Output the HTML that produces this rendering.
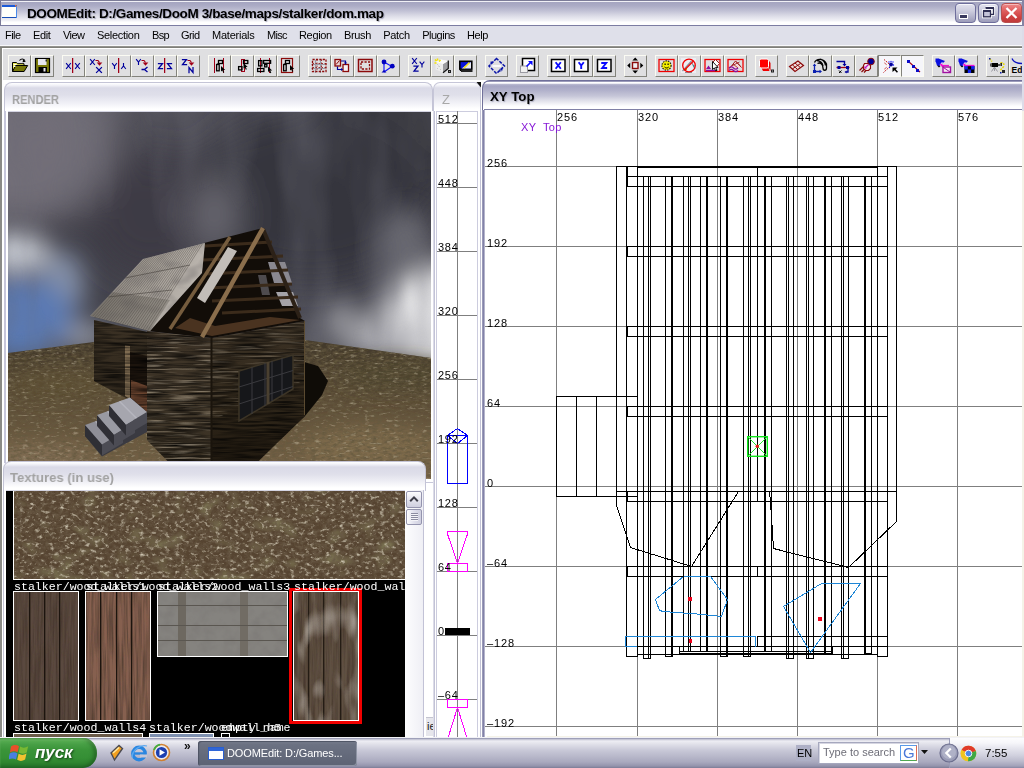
<!DOCTYPE html>
<html><head><meta charset="utf-8"><title>DOOMEdit</title>
<style>
*{margin:0;padding:0;box-sizing:border-box}
html,body{width:1024px;height:768px;overflow:hidden;background:#e1e1ea;font-family:"Liberation Sans",sans-serif}
.a{position:absolute}
#menu,#title,.gl,.zl,.tx,.hl,.tk{will-change:transform}
svg{position:absolute;display:block;overflow:hidden}
#title{left:0;top:0;width:1024px;height:26px;background:linear-gradient(#7c7c98 0,#7c7c98 1px,#f0f0f6 1px,#f0f0f6 2px,#a4a4c0 2px,#acacc6 6px,#c2c2d5 11px,#dcdce7 16px,#f3f3f7 21px,#fff 22px,#fff 25px,#7c7ca2 25px,#7c7ca2 26px)}
#title .t{left:27px;top:6px;font:bold 13.5px "Liberation Sans",sans-serif;color:#000;white-space:nowrap;text-shadow:1px 1px 1px rgba(110,110,140,.55)}
#menu{left:0;top:26px;width:1024px;height:20px;background:linear-gradient(#dfe0ea 0,#dfe0ea 19px,#f8f8fb 19px)}
#menu span{position:absolute;top:3px;font:11px "Liberation Sans",sans-serif;color:#000;white-space:nowrap;transform-origin:0 0}
.b{position:absolute;top:55px;width:23px;height:22px;background:#dfdfe1;border:1px solid;border-color:#fbfbf3 #83837c #83837c #fbfbf3}
.b.p{background:#efeff0;border-color:#83837c #fbfbf3 #fbfbf3 #83837c}
.b svg{left:2px;top:2px;width:17px;height:16px}
.hl{font:bold 13px "Liberation Sans",sans-serif;color:#a2a2a2;position:absolute;white-space:nowrap}
.gl{font:11px "Liberation Sans",sans-serif;letter-spacing:.85px;color:#000;position:absolute;white-space:nowrap;line-height:12px}
.zl{font:11px "Liberation Sans",sans-serif;letter-spacing:.75px;color:#000;position:absolute;white-space:nowrap;line-height:12px}
.tx{font:11.6px "Liberation Mono",monospace;color:#fff;position:absolute;white-space:nowrap;line-height:12px}
</style></head><body>
<!-- window frame -->
<div class="a" style="left:0;top:0;width:2px;height:46px;background:linear-gradient(90deg,#7e7e9a 0,#7e7e9a 1px,#c9c9d9 1px)"></div>
<div class="a" style="left:0;top:46px;width:2px;height:692px;background:#8a8a86"></div>
<div class="a" style="left:2px;top:48px;width:1020px;height:690px;background:#fff"></div>
<div class="a" style="left:3px;top:49px;width:1019px;height:31px;background:#dfdfe1"></div>
<!-- TITLE BAR -->
<div id="title" class="a">
<div class="a" style="left:0;top:0;width:1px;height:26px;background:#7a7a98"></div>
<svg style="left:2px;top:5px" width="15" height="13" viewBox="0 0 15 13"><rect x="0" y="0" width="15" height="13" fill="#fffffa"/><rect x="0" y="0" width="15" height="2" fill="#1c5ad8"/><rect x="0" y="12" width="15" height="1" fill="#1a50b8"/><rect x="14" y="1" width="1" height="12" fill="#4a8ae8"/><rect x="13" y="0" width="1.500" height="1.500" fill="#f07030"/></svg>
<div class="a t" style="letter-spacing:-0.379px">DOOMEdit: D:/Games/DooM 3/base/maps/stalker/dom.map</div>
<div class="a" style="left:955px;top:3px;width:21px;height:20px;border-radius:4px;border:1px solid #6e6e9c;background:linear-gradient(#e2e2ee 0,#cfcfe0 35%,#b4b4cc 70%,#9c9cb9 100%);box-shadow:inset 0 1px 0 rgba(255,255,255,.7)"></div>
<div class="a" style="left:959px;top:14px;width:9px;height:5px;background:#fff"></div><div class="a" style="left:960px;top:15px;width:7px;height:3px;background:#3a3a5e"></div>
<div class="a" style="left:978px;top:3px;width:21px;height:20px;border-radius:4px;border:1px solid #6e6e9c;background:linear-gradient(#e2e2ee 0,#cfcfe0 35%,#b4b4cc 70%,#9c9cb9 100%);box-shadow:inset 0 1px 0 rgba(255,255,255,.7)"></div>
<svg style="left:982px;top:6px" width="13" height="13" viewBox="0 0 13 13"><path d="M4 1.800h7.500v6.500h-2.500" fill="none" stroke="#fff" stroke-width="3"/><rect x="1.500" y="4.800" width="7" height="6" fill="none" stroke="#fff" stroke-width="3"/><path d="M4 2.300h7.500v6h-2.500" fill="none" stroke="#2e2e52" stroke-width="1.300"/><path d="M3.500 1.800h8.500" stroke="#2e2e52" stroke-width="1.600"/><rect x="1.500" y="5.300" width="7" height="5.500" fill="#c4c4d8" stroke="#2e2e52" stroke-width="1.300"/><path d="M1 4.800h8" stroke="#2e2e52" stroke-width="1.600"/></svg>
<div class="a" style="left:1001px;top:3px;width:21px;height:20px;border-radius:4px;border:1px solid #b85050;background:linear-gradient(#ee8a8a 0,#de5c5c 40%,#cc4040 75%,#c03a3a 100%);box-shadow:inset 0 1px 0 rgba(255,220,220,.6)"></div>
<svg style="left:1004px;top:6px" width="15" height="14" viewBox="0 0 15 14"><path d="M2.500 2l10 10M12.500 2l-10 10" stroke="#fff" stroke-width="2.300"/></svg>
<div class="a" style="left:1022px;top:0;width:2px;height:26px;background:#8484a4"></div>
</div>
<!-- MENU -->
<div id="menu" class="a">
<span style="left:5.0px;letter-spacing:-0.559px">File</span>
<span style="left:33.0px;letter-spacing:-0.367px">Edit</span>
<span style="left:63.0px;letter-spacing:-0.539px">View</span>
<span style="left:97.0px;letter-spacing:-0.307px">Selection</span>
<span style="left:152.0px;letter-spacing:-0.656px">Bsp</span>
<span style="left:181.0px;letter-spacing:-0.570px">Grid</span>
<span style="left:212.0px;letter-spacing:-0.236px">Materials</span>
<span style="left:267.0px;letter-spacing:-0.702px">Misc</span>
<span style="left:299.0px;letter-spacing:-0.343px">Region</span>
<span style="left:344.0px;letter-spacing:-0.350px">Brush</span>
<span style="left:383.2px;letter-spacing:-0.308px">Patch</span>
<span style="left:422.2px;letter-spacing:-0.497px">Plugins</span>
<span style="left:467.0px;letter-spacing:-0.406px">Help</span>
</div>
<div class="a" style="left:0;top:46px;width:1022px;height:2px;background:linear-gradient(#9e9e9a,#74746e)"></div>
<div class="a" style="left:2px;top:48px;width:1020px;height:1px;background:#fff"></div>
<!-- TOOLBAR -->
<div class="a" style="left:4px;top:48px;width:1018px;height:34px;overflow:hidden">
<div class="b" style="left:4px;top:7px"><svg style="left:-1px;top:-1px;width:23px;height:22px" viewBox="0 0 23 22"><path d="M11.5 5.5c1.5-2 4-2 5.500 0" stroke="#000" fill="none" stroke-width="1.100"/><path d="M15.300 4l2.500 2.800-3.300.4z" fill="#000"/><path d="M4.500 16.500v-9h4l1 1.200h6.500v2.300" fill="#ecec50" stroke="#000" stroke-width="1"/><path d="M4.500 16.500l3.200-6h12l-3.600 6z" fill="#77770a" stroke="#000" stroke-width="1"/><path d="M5.500 9.500h3M5.500 11.500h2" stroke="#fff" stroke-width="1"/></svg></div>
<div class="b" style="left:27px;top:7px"><svg style="left:-1px;top:-1px;width:23px;height:22px" viewBox="0 0 23 22"><rect x="4.500" y="3.500" width="14" height="14" fill="#7a7a08" stroke="#000" stroke-width="1.200"/><rect x="7" y="4" width="8.500" height="6" fill="#e6e6ee"/><rect x="14.600" y="4.500" width="1.200" height="2" fill="#000"/><rect x="7.500" y="12" width="8.500" height="5.500" fill="#000"/><rect x="12.500" y="13" width="2" height="3.500" fill="#e6e6ee"/></svg></div>
<div class="b" style="left:58px;top:7px"><svg style="left:-1px;top:-1px;width:23px;height:22px" viewBox="0 0 23 22"><path d="M4.5 8.5L8.5 13.5M8.5 8.5L4.5 13.5" stroke="#00009c" stroke-width="1.15" fill="none" stroke-linecap="square"/><rect x="10" y="3" width="1" height="15" fill="#a00018" shape-rendering="crispEdges"/><rect x="11" y="3" width="1" height="15" fill="#a00018" opacity=".25" shape-rendering="crispEdges"/><path d="M13.5 8.5L17.5 13.5M17.5 8.5L13.5 13.5" stroke="#00009c" stroke-width="1.15" fill="none" stroke-linecap="square"/></svg></div>
<div class="b" style="left:81px;top:7px"><svg style="left:-1px;top:-1px;width:23px;height:22px" viewBox="0 0 23 22"><path d="M5.5 4.5L9.5 9.5M9.5 4.5L5.5 9.5" stroke="#00009c" stroke-width="1.15" fill="none" stroke-linecap="square"/><path d="M10.5 5.5h2.500L14.5 7.5" stroke="#a00018" stroke-width="1.200" fill="none"/><path d="M11.7 7.5h5.600L14.5 10.7z" fill="#a00018"/><path d="M11.5 12.5L16.5 17.5M16.5 12.5L11.5 17.5" stroke="#00009c" stroke-width="1.15" fill="none" stroke-linecap="square"/></svg></div>
<div class="b" style="left:104px;top:7px"><svg style="left:-1px;top:-1px;width:23px;height:22px" viewBox="0 0 23 22"><path d="M4.5 8.5L6.5 11L8.5 8.5M6.5 11V13.5" stroke="#00009c" stroke-width="1.15" fill="none" stroke-linecap="square"/><rect x="10" y="3" width="1" height="15" fill="#a00018" shape-rendering="crispEdges"/><rect x="11" y="3" width="1" height="15" fill="#a00018" opacity=".25" shape-rendering="crispEdges"/><path d="M13.5 13.5L15.5 11L17.5 13.5M15.5 11V8.5" stroke="#00009c" stroke-width="1.15" fill="none" stroke-linecap="square"/></svg></div>
<div class="b" style="left:127px;top:7px"><svg style="left:-1px;top:-1px;width:23px;height:22px" viewBox="0 0 23 22"><path d="M5.5 4.5L7.5 7L9.5 4.5M7.5 7V9.5" stroke="#00009c" stroke-width="1.15" fill="none" stroke-linecap="square"/><path d="M10.5 5.5h2.500L14.5 7.5" stroke="#a00018" stroke-width="1.200" fill="none"/><path d="M11.7 7.5h5.600L14.5 10.7z" fill="#a00018"/><path d="M10.500 14.500h3M16.500 12l-3 2.500 3 2.500" stroke="#00009c" stroke-width="1.300" fill="none"/></svg></div>
<div class="b" style="left:150px;top:7px"><svg style="left:-1px;top:-1px;width:23px;height:22px" viewBox="0 0 23 22"><path d="M4.5 8.5H8.5L4.5 13.5H8.5" stroke="#00009c" stroke-width="1.25" fill="none" stroke-linecap="square"/><rect x="10" y="3" width="1" height="15" fill="#a00018" shape-rendering="crispEdges"/><rect x="11" y="3" width="1" height="15" fill="#a00018" opacity=".25" shape-rendering="crispEdges"/><path d="M17.5 8.5H13.5L17.5 13.5H13.5" stroke="#00009c" stroke-width="1.25" fill="none" stroke-linecap="square"/></svg></div>
<div class="b" style="left:173px;top:7px"><svg style="left:-1px;top:-1px;width:23px;height:22px" viewBox="0 0 23 22"><path d="M5.5 4.5H9.5L5.5 9.5H9.5" stroke="#00009c" stroke-width="1.25" fill="none" stroke-linecap="square"/><path d="M10.5 5.5h2.500L14.5 7.5" stroke="#a00018" stroke-width="1.200" fill="none"/><path d="M11.7 7.5h5.600L14.5 10.7z" fill="#a00018"/><path d="M12.0 17.5V12.5L16.0 17.5V12.5" stroke="#00009c" stroke-width="1.25" fill="none" stroke-linecap="square"/></svg></div>
<div class="b" style="left:204px;top:7px"><svg style="left:-1px;top:-1px;width:23px;height:22px" viewBox="0 0 23 22"><rect x="6" y="3" width="1" height="15" fill="#a00018" shape-rendering="crispEdges"/><rect x="15" y="3" width="1" height="15" fill="#a00018" shape-rendering="crispEdges"/><rect x="10.500" y="5.500" width="4" height="3" fill="none" stroke="#000" stroke-width="1.300"/><rect x="8.600" y="9.500" width="2.600" height="6.300" fill="none" stroke="#000" stroke-width="1.300"/><path d="M9 9.500l1.500-1" stroke="#000" stroke-width="1.200"/><path d="M13 11v5.600l1.300-1.200 1 2.300 1-.500-1-2.200h1.900z" fill="#000"/></svg></div>
<div class="b" style="left:227px;top:7px"><svg style="left:-1px;top:-1px;width:23px;height:22px" viewBox="0 0 23 22"><rect x="10.500" y="4.500" width="3" height="12" fill="none" stroke="#a00018" stroke-width="1" shape-rendering="crispEdges"/><rect x="12.500" y="5.500" width="4.300" height="3" fill="none" stroke="#000" stroke-width="1.300"/><rect x="7.600" y="11.600" width="3.400" height="3.300" fill="none" stroke="#000" stroke-width="1.300"/><path d="M12.5 8v5.600l1.300-1.200 1 2.300 1-.500-1-2.200h1.900z" fill="#000"/></svg></div>
<div class="b" style="left:250px;top:7px"><svg style="left:-1px;top:-1px;width:23px;height:22px" viewBox="0 0 23 22"><rect x="6" y="3" width="1" height="15" fill="#a00018" shape-rendering="crispEdges"/><rect x="15" y="3" width="1" height="15" fill="#a00018" shape-rendering="crispEdges"/><rect x="4.600" y="5.600" width="3.300" height="5.300" fill="none" stroke="#000" stroke-width="1.300"/><rect x="9.600" y="5.500" width="7" height="2.800" fill="none" stroke="#000" stroke-width="1.300"/><rect x="3.600" y="13.500" width="6.300" height="3" fill="none" stroke="#000" stroke-width="1.300"/><rect x="10.600" y="9.600" width="2.300" height="2.300" fill="none" stroke="#000" stroke-width="1.300"/><path d="M14 11.5v5.600l1.300-1.200 1 2.300 1-.500-1-2.200h1.900z" fill="#000"/></svg></div>
<div class="b" style="left:273px;top:7px"><svg style="left:-1px;top:-1px;width:23px;height:22px" viewBox="0 0 23 22"><rect x="4.500" y="3.500" width="11" height="14" fill="none" stroke="#8c0a0a" stroke-width="1.200"/><rect x="8.500" y="5.500" width="4" height="3" fill="none" stroke="#000" stroke-width="1.300"/><rect x="6.600" y="9.500" width="2.600" height="6.300" fill="none" stroke="#000" stroke-width="1.300"/><path d="M7 9.500l1.500-1" stroke="#000" stroke-width="1.200"/><path d="M13 10v5.600l1.300-1.200 1 2.300 1-.500-1-2.200h1.900z" fill="#000"/></svg></div>
<div class="b" style="left:304px;top:7px"><svg style="left:-1px;top:-1px;width:23px;height:22px" viewBox="0 0 23 22"><path d="M7.500 5v13M12.500 5v13M3.500 9.500h14M3.500 13.500h14" stroke="#9a9aa6" stroke-width="1.200"/><rect x="4.500" y="4.500" width="13.500" height="12" fill="none" stroke="#8c0a0a" stroke-width="1.300" stroke-dasharray="2.200 1.200"/><path d="M4.500 8.500h13.500M4.500 12.500h13.500M9 4.500v12M13.500 4.500v12" stroke="#8c0a0a" stroke-width="1" stroke-dasharray="1.500 1.500" opacity=".8"/></svg></div>
<div class="b" style="left:327px;top:7px"><svg style="left:-1px;top:-1px;width:23px;height:22px" viewBox="0 0 23 22"><rect x="4" y="4.500" width="5.500" height="6.500" fill="#e8d8d8" stroke="#8c0a0a" stroke-width="1.300"/><path d="M5 9.500l3.500-4" stroke="#8c0a0a" stroke-width="1"/><rect x="12" y="9.500" width="5.500" height="7" fill="#f4f4f8" stroke="#8c0a0a" stroke-width="1.300"/><path d="M10 6h4.500v2.500M6.500 11.500v3h4" stroke="#00009c" stroke-width="1.200" fill="none"/><path d="M13 7.500h3l-1.500 2.200zM10 13h0l2.200 1.500-2.200 1.500z" fill="#00009c"/></svg></div>
<div class="b" style="left:350px;top:7px"><svg style="left:-1px;top:-1px;width:23px;height:22px" viewBox="0 0 23 22"><rect x="4.500" y="4.500" width="13.500" height="12" fill="none" stroke="#8c0a0a" stroke-width="1.500"/><rect x="7" y="7" width="8.500" height="7" fill="none" stroke="#8c0a0a" stroke-width="1.300" stroke-dasharray="2.200 1.300"/></svg></div>
<div class="b" style="left:373px;top:7px"><svg style="left:-1px;top:-1px;width:23px;height:22px" viewBox="0 0 23 22"><path d="M7 7v10M7 7l8 4.500L7 17" stroke="#0a0aff" stroke-width="1.100" fill="none"/><circle cx="7" cy="7" r="2.400" fill="#0000c0"/><circle cx="15.300" cy="11.200" r="2.400" fill="#0000c0"/><path d="M4.500 17.500l2.500-2.500 2.500 2.500z" fill="#0000c0"/></svg></div>
<div class="b" style="left:404px;top:7px"><svg style="left:-1px;top:-1px;width:23px;height:22px" viewBox="0 0 23 22"><path d="M4.5 3.5L8.5 8.5M8.5 3.5L4.5 8.5" stroke="#00009c" stroke-width="1.15" fill="none" stroke-linecap="square"/><path d="M12.0 7.0L14 9.5L16.0 7.0M14 9.5V12.0" stroke="#00009c" stroke-width="1.15" fill="none" stroke-linecap="square"/><path d="M6.0 11.0H10.0L6.0 16.0H10.0" stroke="#00009c" stroke-width="1.25" fill="none" stroke-linecap="square"/></svg></div>
<div class="b" style="left:427px;top:7px"><svg style="left:-1px;top:-1px;width:23px;height:22px" viewBox="0 0 23 22"><path d="M4.500 7l5.500-2.500 7 1.500v7.500l-5 4-7.500-3z" fill="#ececec"/><path d="M12 17.500V9l5-3v7.500z" fill="#9c9ca0"/><path d="M4.500 7l7.500 2 5-3-7-1.500z" fill="#fbfbfb"/><path d="M17.300 5.500v8l-5.300 4.300" fill="none" stroke="#111" stroke-width="1.200"/><path d="M6 9.500h1M8 11.500h1M6 13.500h1M9 14.500h1M7 11h1" stroke="#c8c8c8" stroke-width="1"/><path d="M4 4.500l1.500 1.500M6.500 3.500v2M3.500 8h2M8 6.500l1.500-1.500" stroke="#f4e400" stroke-width="1.500"/><rect x="17" y="15" width="3" height="3" fill="#1c1c1c" shape-rendering="crispEdges"/><rect x="18" y="16" width="1" height="1" fill="#999" shape-rendering="crispEdges"/></svg></div>
<div class="b" style="left:450px;top:7px"><svg style="left:-1px;top:-1px;width:23px;height:22px" viewBox="0 0 23 22"><rect x="5.800" y="6.300" width="12" height="7.800" fill="#0a14d8" stroke="#000" stroke-width="1.600"/><path d="M17 7v6.500h-9.500z" fill="#e6e8f4"/><path d="M10 13l5.500-5.500" stroke="#f2e21c" stroke-width="1.700"/><path d="M7 16h11.500" stroke="#000" stroke-width="1.700"/><path d="M6.500 14.500v1.500" stroke="#000" stroke-width="1.300"/></svg></div>
<div class="b" style="left:481px;top:7px"><svg style="left:-1px;top:-1px;width:23px;height:22px" viewBox="0 0 23 22"><path d="M11.500 3.500L4 11l7.500 7.500L19.500 11z" fill="none" stroke="#0a14a8" stroke-width="1.500" stroke-dasharray="3.200 1.300"/><rect x="7.500" y="10" width="8.500" height="2" fill="#fafafc"/><path d="M5.500 6.500h3.500l-3.500 3.500zM17.500 15.500h-3.500l3.500-3.500zM13.500 16l3 .5-1.500-3z" fill="#0a14a8"/></svg></div>
<div class="b" style="left:512px;top:7px"><svg style="left:-1px;top:-1px;width:23px;height:22px" viewBox="0 0 23 22"><rect x="6.500" y="3.500" width="12" height="12" fill="#fff" stroke="#000" stroke-width="1.500"/><rect x="4.500" y="11" width="7" height="6.500" fill="#f0f0f0" stroke="#9a9aa2" stroke-width="1"/><path d="M10.500 11.500l5-5" stroke="#0a0aff" stroke-width="1.600"/><path d="M12 6h4.500v4.500z" fill="#0a0aff"/></svg></div>
<div class="b" style="left:543px;top:7px"><svg style="left:-1px;top:-1px;width:23px;height:22px" viewBox="0 0 23 22"><rect x="4.500" y="4.500" width="13.500" height="12" fill="#fff" stroke="#000" stroke-width="1.500"/><path d="M9.2 8.0L13.2 13.0M13.2 8.0L9.2 13.0" stroke="#0a0aff" stroke-width="1.9" fill="none" stroke-linecap="square"/></svg></div>
<div class="b" style="left:566px;top:7px"><svg style="left:-1px;top:-1px;width:23px;height:22px" viewBox="0 0 23 22"><rect x="4.500" y="4.500" width="13.500" height="12" fill="#fff" stroke="#000" stroke-width="1.500"/><path d="M9.2 8.0L11.2 10.5L13.2 8.0M11.2 10.5V13.0" stroke="#0a0aff" stroke-width="1.9" fill="none" stroke-linecap="square"/></svg></div>
<div class="b" style="left:589px;top:7px"><svg style="left:-1px;top:-1px;width:23px;height:22px" viewBox="0 0 23 22"><rect x="4.500" y="4.500" width="13.500" height="12" fill="#fff" stroke="#000" stroke-width="1.500"/><path d="M9.2 8.0H13.2L9.2 13.0H13.2" stroke="#0a0aff" stroke-width="1.9" fill="none" stroke-linecap="square"/></svg></div>
<div class="b" style="left:620px;top:7px"><svg style="left:-1px;top:-1px;width:23px;height:22px" viewBox="0 0 23 22"><rect x="8.500" y="7.500" width="5.500" height="6" fill="#f0f0f4" stroke="#8c0a0a" stroke-width="1.400"/><path d="M11.200 2.500l2.800 3h-5.600zM11.200 18.500l2.800-3h-5.600zM3.200 10.500l3-2.800v5.600zM19.300 10.500l-3-2.800v5.600z" fill="#000"/></svg></div>
<div class="b" style="left:651px;top:7px"><svg style="left:-1px;top:-1px;width:23px;height:22px" viewBox="0 0 23 22"><rect x="4" y="4.500" width="15" height="12" fill="none" stroke="#f00000" stroke-width="1.300"/><circle cx="11.500" cy="10.500" r="4.600" fill="#f4f000" stroke="#111" stroke-width="1.100" stroke-dasharray="1.500 1"/><rect x="9.500" y="8.500" width="1.200" height="1.500" fill="#000"/><rect x="12.500" y="8.500" width="1.200" height="1.500" fill="#000"/><path d="M9.500 12c1.300 1.300 3 1.300 4.200 0" stroke="#000" fill="none" stroke-width="1"/></svg></div>
<div class="b" style="left:674px;top:7px"><svg style="left:-1px;top:-1px;width:23px;height:22px" viewBox="0 0 23 22"><rect x="3" y="3" width="15" height="15" fill="#ededf3"/><path d="M4.500 16l9-10M7 17.500h7M14 8l3 6" stroke="#8c8c96" stroke-width="1.200"/><rect x="7" y="13" width="2" height="2" fill="#c8b400"/><rect x="15" y="10" width="1.500" height="1.500" fill="#20a0a0"/><circle cx="11" cy="10.500" r="6.300" fill="none" stroke="#f00000" stroke-width="1.300"/><path d="M6.500 15L15.500 6" stroke="#f00000" stroke-width="1.300"/></svg></div>
<div class="b" style="left:697px;top:7px"><svg style="left:-1px;top:-1px;width:23px;height:22px" viewBox="0 0 23 22"><rect x="4" y="4.500" width="15" height="12" fill="none" stroke="#f00000" stroke-width="1.300"/><path d="M5 14l2.500-3.500L10 14z" fill="#8a10a0"/><path d="M5 15.500h9" stroke="#8a10a0" stroke-width="1.500"/><path d="M11 8l3.500-3.500 4 4-3.500 4z" fill="#fff" stroke="#a01818" stroke-width="1"/><path d="M11.500 6.500v8l1.800-1.600 1.400 3 1.300-.6-1.400-2.900h2.400z" fill="#fff" stroke="#000" stroke-width=".900"/></svg></div>
<div class="b" style="left:720px;top:7px"><svg style="left:-1px;top:-1px;width:23px;height:22px" viewBox="0 0 23 22"><rect x="4" y="4.500" width="15" height="12" fill="none" stroke="#f00000" stroke-width="1.300"/><path d="M5.500 13.500l6-7.500 6 6.500" fill="#f2dada" stroke="#a01818" stroke-width="1"/><path d="M9 9l5 4M12 6.500l4 4M7.500 11l8-4" stroke="#a01818" stroke-width=".800"/><path d="M5 13c1.500-1.500 3-1.500 4.500 0s3 1.500 4.500 0M5 15.500c1.500-1.500 3-1.500 4.500 0s3 1.500 4.500 0" stroke="#8a10a0" stroke-width="1.300" fill="none"/></svg></div>
<div class="b" style="left:751px;top:7px"><svg style="left:-1px;top:-1px;width:23px;height:22px" viewBox="0 0 23 22"><path d="M6 12l2 4h6.500l-1.500-4z" fill="#f00000"/><path d="M13.500 5l2 3v8l-2-4z" fill="#e00000"/><rect x="4.500" y="4" width="9" height="9" rx="1.500" fill="#ff0000" stroke="#fff" stroke-width="1"/><rect x="16" y="14.500" width="3" height="3" fill="#222"/><rect x="17" y="15.500" width="1" height="1" fill="#bbb"/></svg></div>
<div class="b" style="left:782px;top:7px"><svg style="left:-1px;top:-1px;width:23px;height:22px" viewBox="0 0 23 22"><path d="M3.500 11.500l8.500-5.500 5.500 4.500-8.500 6z" fill="#f0dcdc" stroke="#8c0a0a" stroke-width="1.200"/><path d="M6.300 9.700l5.500 5M9 8l5.500 4.700M6.300 14l8.500-5.700" stroke="#8c0a0a" stroke-width="1"/></svg></div>
<div class="b" style="left:805px;top:7px"><svg style="left:-1px;top:-1px;width:23px;height:22px" viewBox="0 0 23 22"><path d="M5.500 7.500c2-4.500 9.500-4.500 12 1.500v4c0 3-3.500 3-3.500 0 0-4-3-6-5.500-4.500M8 5.500c3 .5 5.500 2.500 6 5.500M11.500 4c2.500 1 4.500 3 5 6.500" fill="none" stroke="#000" stroke-width="1.300"/><path d="M5.500 9.500v7h6.500" stroke="#0a1fb0" stroke-width="1.300" fill="none"/><path d="M3.800 11l1.700-2.500L7.200 11zM10.500 14.800l2.500 1.700-2.500 1.700zM4 15h3v3h-3z" fill="#0a1fb0"/></svg></div>
<div class="b" style="left:828px;top:7px"><svg style="left:-1px;top:-1px;width:23px;height:22px" viewBox="0 0 23 22"><path d="M4.500 6.500h8v3" stroke="#00009c" stroke-width="1.400" fill="none"/><path d="M10.500 9h4l-2 2.500z" fill="#00009c"/><path d="M4.500 12.500h13" stroke="#a00018" stroke-width="1.300"/><rect x="5.500" y="11" width="3" height="3" fill="#00009c"/><rect x="14" y="11" width="3" height="3" fill="#00009c"/><path d="M16 14v3h-2" stroke="#00009c" stroke-width="1.300" fill="none"/><path d="M14.500 15.500v3l-2-1.500z" fill="#00009c"/><path d="M7 15.500l2.500 2.500M9.500 15.500l-2.500 2.500" stroke="#000" stroke-width="1"/></svg></div>
<div class="b" style="left:851px;top:7px"><svg style="left:-1px;top:-1px;width:23px;height:22px" viewBox="0 0 23 22"><path d="M4.500 15.500l6-6M6.500 17l5-5M9 17.500l3.500-3.500" stroke="#8c0a0a" stroke-width="1.200"/><path d="M9.500 8.500h4l2 2v3l-2 2h-3l-2-2v-3z" fill="#f4e8ec" stroke="#8c0a0a" stroke-width="1.100"/><path d="M13.500 9.500l-3.500 3.500" stroke="#c010c0" stroke-width="1.300"/><path d="M9.500 11v2.500H12z" fill="#c010c0"/><circle cx="16" cy="6.500" r="3.300" fill="#00009c" stroke="#8c0a0a" stroke-width="1"/></svg></div>
<div class="b p" style="left:874px;top:7px"><svg style="left:-1px;top:-1px;width:23px;height:22px" viewBox="0 0 23 22"><rect x="1" y="1" width="21" height="20" fill="#f6f6fa"/><path d="M6 4.500l7 6-7.500 7M6.500 8l2.500 2M6.500 14l2.500-2" stroke="#c01818" stroke-width="1" fill="none" stroke-dasharray="1.600 1"/><circle cx="13" cy="9.500" r="1.900" fill="#00009c"/><path d="M11 7l.01 0M15 7l.01 0M15.500 10l.01 0M11.500 12.500l.01 0M13 6.500l.01 0" stroke="#0a0aff" stroke-width="1.300" stroke-linecap="round"/><path d="M14.500 12.500h5l-1.800 1.700 2.300 2.500-1.100 1-2.300-2.500-2.100 1.800z" fill="#000"/></svg></div>
<div class="b p" style="left:897px;top:7px"><svg style="left:-1px;top:-1px;width:23px;height:22px" viewBox="0 0 23 22"><rect x="1" y="1" width="21" height="20" fill="#f6f6fa"/><path d="M7 6l12 11" stroke="#a00018" stroke-width="1.100"/><rect x="6" y="5" width="3" height="3" fill="#0a0ac8"/><rect x="11" y="10" width="3" height="3" fill="#0a0ac8"/><rect x="15" y="14" width="3" height="3" fill="#0a0ac8"/></svg></div>
<div class="b" style="left:928px;top:7px"><svg style="left:-1px;top:-1px;width:23px;height:22px" viewBox="0 0 23 22"><path d="M3.500 6l3-2.500 6.500 2.500-5.500 5.500-2.500-1z" fill="#0a10e0"/><path d="M3.500 3.500h3v3h-3z" fill="#0a10e0"/><path d="M5 10.500l2 2 1.500-1.500z" fill="#000"/><path d="M8 10.500l2.500-3" stroke="#fff" stroke-width="1.200"/><path d="M8.500 9l3 3" stroke="#f010d0" stroke-width="1.800"/><rect x="11" y="12" width="7.500" height="5.500" fill="#f4e8f4" stroke="#a010a0" stroke-width="1.400"/><path d="M11.500 12.500l6.500 4.500" stroke="#a010a0" stroke-width="1"/><path d="M9 10.500h8" stroke="#f010d0" stroke-width="1.200"/></svg></div>
<div class="b" style="left:951px;top:7px"><svg style="left:-1px;top:-1px;width:23px;height:22px" viewBox="0 0 23 22"><path d="M3.500 6l3-2.500 6.500 2.500-5.500 5.500-2.500-1z" fill="#0a10e0"/><path d="M3.500 3.500h3v3h-3z" fill="#0a10e0"/><path d="M5 10.500l2 2 1.500-1.500z" fill="#000"/><path d="M8 10.500l2.500-3" stroke="#fff" stroke-width="1.200"/><path d="M8.500 9l3 3" stroke="#f010d0" stroke-width="1.800"/><rect x="9.500" y="11" width="10" height="7" fill="#000"/><rect x="9.500" y="11" width="3.300" height="3.500" fill="#1020f0"/><rect x="16.100" y="11" width="3.400" height="3.500" fill="#1020f0"/><rect x="12.800" y="14.500" width="3.300" height="3.500" fill="#1020f0"/><path d="M9 10.500h10.500" stroke="#f010d0" stroke-width="1.300"/></svg></div>
<div class="b" style="left:982px;top:7px"><svg style="left:-1px;top:-1px;width:23px;height:22px" viewBox="0 0 23 22"><rect x="5.500" y="8" width="6.500" height="4" fill="#000"/><path d="M12 9h2v2h-2zM4 8.500h1.500v3H4z" fill="#555"/><path d="M8.500 12l-3 4.500M8.500 12l3 4.500M8.500 12v4" stroke="#9a9aa2" stroke-width="1"/><path d="M3.500 3.500l2.500 3M14.500 8c3-1 4 1 3 3.500s-3 2-3 5" stroke="#e8d800" stroke-width="1.500" fill="none" stroke-dasharray="2 1"/><rect x="14.500" y="8" width="1.300" height="3" fill="#000"/><rect x="16" y="15" width="3" height="3" fill="#222"/><rect x="14" y="17" width="1.500" height="1.500" fill="#0a1fb0"/><rect x="3" y="3" width="1.500" height="1.500" fill="#0a1fb0"/></svg></div>
<div class="b" style="left:1005px;top:7px"><svg style="left:-1px;top:-1px;width:23px;height:22px" viewBox="0 0 23 22"><path d="M3 3.500c1.500 3.500 5 5 10 5" stroke="#0a10c0" stroke-width="1.300" fill="none"/><text x="2.500" y="17.500" font-family="Liberation Sans" font-weight="bold" font-size="8.500" fill="#000">Edi</text></svg></div>
</div>
<div class="a" style="left:1022px;top:26px;width:2px;height:712px;background:#dcdce8"></div>
<!-- RENDER PANEL -->
<div class="a" style="left:4px;top:82px;width:429px;height:30px;border-radius:8px 8px 0 0;background:linear-gradient(#fff 0,#f4f4f9 2px,#dadae7 5px,#dfdfea 12px,#f0f0f6 20px,#fff 26px);border:1px solid #c4c4d6;border-bottom:none"></div>
<div class="hl" style="transform:scaleX(0.8560);transform-origin:0 0;left:11.500px;top:92px">RENDER</div>
<div class="a" style="left:4px;top:111px;width:4px;height:352px;background:linear-gradient(90deg,#c6c6da 0,#c6c6da 2px,#fff 2px)"></div>
<div class="a" style="left:431px;top:111px;width:2px;height:627px;background:#fff"></div>
<div class="a" style="left:425px;top:479px;width:6px;height:259px;background:#fff"></div>
<div class="a" style="left:426px;top:482px;width:8px;height:1px;background:#c8c8da"></div>
<div class="a" style="left:8px;top:111px;width:423px;height:1px;background:#d4d4e2"></div>
<svg style="left:8px;top:112px" width="423" height="367" viewBox="8 112 423 367">
<defs>
<linearGradient id="sky" x1="0" y1="0" x2="0" y2="1"><stop offset="0" stop-color="#4f4e57"/><stop offset=".3" stop-color="#403f48"/><stop offset=".55" stop-color="#45454e"/><stop offset=".7" stop-color="#5c5c64"/></linearGradient>
<linearGradient id="gnd" x1="0" y1="0" x2="0" y2="1"><stop offset="0" stop-color="#41382a"/><stop offset=".35" stop-color="#564833"/><stop offset=".75" stop-color="#6c5a40"/><stop offset="1" stop-color="#7c674b"/></linearGradient>
<linearGradient id="roof" x1="0" y1="0" x2="1" y2="0.3"><stop offset="0" stop-color="#7c7771"/><stop offset=".5" stop-color="#a09a93"/><stop offset="1" stop-color="#bdb7b0"/></linearGradient>
<linearGradient id="wl" x1="0" y1="0" x2="0" y2="1"><stop offset="0" stop-color="#3b3124"/><stop offset="1" stop-color="#2e261b"/></linearGradient>
<linearGradient id="wm" x1="0" y1="0" x2="0" y2="1"><stop offset="0" stop-color="#3a3024"/><stop offset=".5" stop-color="#43392b"/><stop offset="1" stop-color="#30281c"/></linearGradient>
<linearGradient id="wr" x1="0" y1="0" x2="0" y2="1"><stop offset="0" stop-color="#3c3225"/><stop offset=".55" stop-color="#30271a"/><stop offset="1" stop-color="#1c150c"/></linearGradient>
<filter id="bl" x="-50%" y="-50%" width="200%" height="200%"><feGaussianBlur stdDeviation="18"/></filter>
<filter id="bm" x="-50%" y="-50%" width="200%" height="200%"><feGaussianBlur stdDeviation="12"/></filter>
<filter id="bs" x="-50%" y="-50%" width="200%" height="200%"><feGaussianBlur stdDeviation="9"/></filter>
<filter id="wood" x="0" y="0" width="100%" height="100%"><feTurbulence type="fractalNoise" baseFrequency="0.03 0.45" numOctaves="2" seed="4" result="n"/><feColorMatrix in="n" type="matrix" values="0 0 0 0 0  0 0 0 0 0  0 0 0 0 0  1.6 0 0 0 -0.55"/><feComposite in2="SourceGraphic" operator="in"/></filter>
<filter id="woodl" x="0" y="0" width="100%" height="100%"><feTurbulence type="fractalNoise" baseFrequency="0.03 0.45" numOctaves="2" seed="9" result="n"/><feColorMatrix in="n" type="matrix" values="0 0 0 0 .58  0 0 0 0 .49  0 0 0 0 .36  0 1.8 0 0 -0.95"/><feComposite in2="SourceGraphic" operator="in"/></filter>
<filter id="grass" x="0" y="0" width="100%" height="100%"><feTurbulence type="fractalNoise" baseFrequency="0.18 0.4" numOctaves="3" seed="2" result="n"/><feColorMatrix in="n" type="matrix" values="0 0 0 0 .13  0 0 0 0 .1  0 0 0 0 .05  2.0 0 0 0 -0.72"/><feComposite in2="SourceGraphic" operator="in"/></filter>
<filter id="grassl" x="0" y="0" width="100%" height="100%"><feTurbulence type="fractalNoise" baseFrequency="0.14 0.4" numOctaves="3" seed="11" result="n"/><feColorMatrix in="n" type="matrix" values="0 0 0 0 .56  0 0 0 0 .5  0 0 0 0 .36  0 1.8 0 0 -1.08"/><feComposite in2="SourceGraphic" operator="in"/></filter>
<filter id="cl" x="0" y="0" width="100%" height="100%"><feTurbulence type="fractalNoise" baseFrequency="0.018 0.006" numOctaves="3" seed="5" result="n"/><feColorMatrix in="n" type="matrix" values="0 0 0 0 .14  0 0 0 0 .14  0 0 0 0 .17  1.1 0 0 0 -0.45"/><feComposite in2="SourceGraphic" operator="in"/></filter>
<filter id="cor" x="0" y="0" width="100%" height="100%"><feTurbulence type="fractalNoise" baseFrequency="0.05 0.08" numOctaves="2" seed="7" result="n"/><feColorMatrix in="n" type="matrix" values="0 0 0 0 .25  0 0 0 0 .23  0 0 0 0 .22  1.8 0 0 0 -0.75"/><feComposite in2="SourceGraphic" operator="in"/></filter>
</defs>
<rect x="8" y="112" width="423" height="367" fill="url(#sky)"/>
<g filter="url(#bl)">
<ellipse cx="20" cy="135" rx="95" ry="90" fill="#726e78"/>
<ellipse cx="420" cy="120" rx="110" ry="70" fill="#3b3b43"/>
<ellipse cx="310" cy="195" rx="120" ry="85" fill="#35343d"/>
<ellipse cx="150" cy="215" rx="60" ry="60" fill="#3c3b44"/>
<ellipse cx="215" cy="215" rx="22" ry="40" fill="#6c6b73"/>
</g><g filter="url(#bm)">
<ellipse cx="12" cy="252" rx="38" ry="20" fill="#c4c8d0"/>
<ellipse cx="62" cy="285" rx="22" ry="34" fill="#8490a8"/>
<ellipse cx="22" cy="318" rx="52" ry="40" fill="#5a79b2"/>
<ellipse cx="85" cy="335" rx="20" ry="10" fill="#a0a6b4"/>
<ellipse cx="440" cy="318" rx="62" ry="52" fill="#e4e4e6"/>
<ellipse cx="385" cy="338" rx="40" ry="20" fill="#b4b4b9"/>
<ellipse cx="343" cy="322" rx="22" ry="22" fill="#8c8c93"/>
<ellipse cx="405" cy="245" rx="26" ry="36" fill="#686870"/>
</g>
<rect x="8" y="112" width="423" height="250" fill="#000" filter="url(#cl)"/>
<polygon points="8,353 94,342 305,340 431,358 431,479 8,479" fill="url(#gnd)"/>
<g filter="url(#bs)"><ellipse cx="40" cy="458" rx="55" ry="13" fill="#847056"/><ellipse cx="400" cy="375" rx="60" ry="14" fill="#4d452d"/><ellipse cx="370" cy="448" rx="70" ry="22" fill="#7e6a4c"/><ellipse cx="60" cy="385" rx="50" ry="14" fill="#5c4e30"/></g>
<polygon points="8,353 94,342 305,340 431,358 431,479 8,479" fill="#000" filter="url(#grass)"/>
<polygon points="8,353 94,342 305,340 431,358 431,479 8,479" fill="#000" filter="url(#grassl)"/>
<polygon points="304,362 318,366 328,381 322,395 305,416 250,466 212,470 212,440" fill="#0f0c07"/>
<polygon points="94,320 147,332 147,421 128,399 94,381" fill="url(#wl)"/>
<polygon points="130,352 147,356 147,412 130,398" fill="#1c140d"/>
<polygon points="131,380 147,386 147,412 131,398" fill="#6e4630"/>
<polygon points="125,345 130,346 130,399 125,396" fill="#7d6a50"/>
<polygon points="94,317 150,331 206,337 202,300 150,318" fill="#0c0a08"/>
<polygon points="147,331 212,338 212,479 185,479 147,440" fill="url(#wm)"/>
<polygon points="212,338 305,321 305,416 240,479 212,479" fill="url(#wr)"/>
<polygon points="94,320 147,332 212,338 305,321 305,416 240,479 185,479 147,440 147,421 128,399 94,381" fill="#000" filter="url(#wood)"/>
<polygon points="147,331 212,338 212,479 185,479 147,440" fill="#000" filter="url(#woodl)"/>
<polygon points="212,338 305,321 305,380 212,420" fill="#000" filter="url(#woodl)" opacity=".7"/>
<path d="M211.5 338V479" stroke="#1a140c" stroke-width="2"/><path d="M304.5 321V415" stroke="#5a4a30" stroke-width="1"/>
<polygon points="239,371 293,355 293,389 239,421" fill="#16171a" stroke="#3c3426" stroke-width="1.5"/>
<path d="M252 367v47M265 363v43M272 361v40M282 358v37M239 387l54-16.5M239 404l54-17.5" stroke="#3a3a3e" stroke-width="1" fill="none"/>
<path d="M268 362v42" stroke="#4a4030" stroke-width="3"/>
<polygon points="204,243 263,228 300,318 305,321 212,338 150,331 200,275" fill="#120d08"/>
<polygon points="268,262 285,262 292,283 274,283" fill="#8a8890"/><polygon points="276,292 293,292 298,306 282,306" fill="#a5a3a8"/><polygon points="258,275 266,275 270,295 262,295" fill="#77757d" opacity=".6"/>
<path d="M205 246L272 242" stroke="#3b2b1b" stroke-width="3"/>
<path d="M203 260L283 256" stroke="#3b2b1b" stroke-width="3"/>
<path d="M205 274L288 270" stroke="#3b2b1b" stroke-width="3"/>
<path d="M208 288L292 284" stroke="#3b2b1b" stroke-width="3"/>
<path d="M212 301L298 297" stroke="#3b2b1b" stroke-width="3"/>
<path d="M222 313L301 309" stroke="#3b2b1b" stroke-width="3"/>
<polygon points="175,328 212,336 300,320 270,317 215,326 190,318" fill="#4a3320"/>
<path d="M263 229L300 318" stroke="#2c2117" stroke-width="4"/>
<polygon points="90,316 143,259 205,243 202,273 150,331" fill="url(#roof)"/>
<polygon points="90,316 143,259 205,243 202,273 150,331" fill="#000" filter="url(#cor)"/>
<clipPath id="rc"><polygon points="90,316 143,259 205,243 202,273 150,331"/></clipPath>
<g clip-path="url(#rc)"><path d="M145.4 258.4L92.3 316.6M147.8 257.8L94.6 317.2M150.2 257.2L96.9 317.7M152.5 256.5L99.2 318.3M154.9 255.9L101.5 318.9M157.3 255.3L103.8 319.5M159.7 254.7L106.2 320.0M162.1 254.1L108.5 320.6M164.5 253.5L110.8 321.2M166.8 252.8L113.1 321.8M169.2 252.2L115.4 322.3M171.6 251.6L117.7 322.9M174.0 251.0L120.0 323.5M176.4 250.4L122.3 324.1M178.8 249.8L124.6 324.7M181.2 249.2L126.9 325.2M183.5 248.5L129.2 325.8M185.9 247.9L131.5 326.4M188.3 247.3L133.8 327.0M190.7 246.7L136.2 327.5M193.1 246.1L138.5 328.1M195.5 245.5L140.8 328.7M197.8 244.8L143.1 329.3M200.2 244.2L145.4 329.8M202.6 243.6L147.7 330.4" stroke="#55504a" stroke-width=".8" opacity=".55"/>
<path d="M125 278L190 265M108 297L172 290" stroke="#4a4540" stroke-width="1.2" opacity=".6"/>
<polygon points="90,316 112,292 170,300 150,331" fill="#3c3833" opacity=".28"/></g>
<polygon points="228,247 237,251 205,303 197,298" fill="#c2bdb8"/>
<path d="M230 237L170 329" stroke="#755c3e" stroke-width="3.5"/>
<path d="M263 228L202 337" stroke="#8a6e4c" stroke-width="4.5"/>
<polygon points="85,436 102,456.500 147,432 147,412 85,425" fill="#3a3a41"/>
<polygon points="85,425 102,444.5 102,455.5 85,436" fill="#2f2f35"/>
<polygon points="102,444.5 123,432 123,443 102,455.5" fill="#4c4c54"/>
<polygon points="85,425 106,417.5 123,432 102,444.5" fill="#8f8f97"/>
<path d="M95.5 421.25L112.5 438.25" stroke="#c4c4cc" stroke-width="1.5" opacity=".55"/>
<polygon points="97,415 114,434.5 114,445.5 97,426" fill="#2f2f35"/>
<polygon points="114,434.5 135,422 135,433 114,445.5" fill="#4c4c54"/>
<polygon points="97,415 118,407.5 135,422 114,434.5" fill="#999aa2"/>
<path d="M107.5 411.25L124.5 428.25" stroke="#c4c4cc" stroke-width="1.5" opacity=".55"/>
<polygon points="109,405 126,424.5 126,435.5 109,416" fill="#2f2f35"/>
<polygon points="126,424.5 147,412 147,423 126,435.5" fill="#4c4c54"/>
<polygon points="109,405 130,397.5 147,412 126,424.5" fill="#a6a6ae"/>
<path d="M119.5 401.25L136.5 418.25" stroke="#c4c4cc" stroke-width="1.5" opacity=".55"/>
</svg>
<!-- TEXTURES PANEL -->
<div class="a" style="left:3px;top:461px;width:423px;height:30px;border-radius:8px 8px 0 0;background:linear-gradient(#fff 0,#f4f4f9 2px,#dadae7 5px,#dfdfea 12px,#f0f0f6 20px,#fff 26px);border:1px solid #c4c4d6;border-bottom:none"></div>
<div class="hl" style="transform:scaleX(0.9717);transform-origin:0 0;left:10px;top:470px;font-size:13.500px">Textures (in use)</div>
<div class="a" style="left:3px;top:490px;width:3px;height:248px;background:linear-gradient(90deg,#c4c4d6 0,#c4c4d6 1px,#fff 1px)"></div>
<div class="a" style="left:6px;top:490px;width:399px;height:1px;background:#d4d4e2"></div>
<div class="a" style="left:6px;top:491px;width:399px;height:247px;background:#000;overflow:hidden">
<svg width="399" height="247" viewBox="6 491 399 247">
<defs>
<filter id="g1" x="0" y="0" width="100%" height="100%"><feTurbulence type="fractalNoise" baseFrequency="0.22 0.3" numOctaves="3" seed="3" result="n"/><feColorMatrix in="n" type="matrix" values="0 0 0 0 .14  0 0 0 0 .1  0 0 0 0 .06  2.2 0 0 0 -0.8"/><feComposite in2="SourceGraphic" operator="in"/></filter>
<filter id="g2" x="0" y="0" width="100%" height="100%"><feTurbulence type="fractalNoise" baseFrequency="0.2 0.28" numOctaves="3" seed="12" result="n"/><feColorMatrix in="n" type="matrix" values="0 0 0 0 .7  0 0 0 0 .65  0 0 0 0 .52  0 2.6 0 0 -1.42"/><feComposite in2="SourceGraphic" operator="in"/></filter>
<filter id="g3" x="0" y="0" width="100%" height="100%"><feTurbulence type="fractalNoise" baseFrequency="0.04 0.06" numOctaves="2" seed="8" result="n"/><feColorMatrix in="n" type="matrix" values="0 0 0 0 .36  0 0 0 0 .38  0 0 0 0 .18  0 0 2.0 0 -1.1"/><feComposite in2="SourceGraphic" operator="in"/></filter>
<filter id="wv" x="0" y="0" width="100%" height="100%"><feTurbulence type="fractalNoise" baseFrequency="0.5 0.02" numOctaves="2" seed="6" result="n"/><feColorMatrix in="n" type="matrix" values="0 0 0 0 .05  0 0 0 0 .03  0 0 0 0 .02  1.4 0 0 0 -0.48"/><feComposite in2="SourceGraphic" operator="in"/></filter>
<filter id="wvl" x="0" y="0" width="100%" height="100%"><feTurbulence type="fractalNoise" baseFrequency="0.06 0.025" numOctaves="2" seed="16" result="n"/><feColorMatrix in="n" type="matrix" values="0 0 0 0 .62  0 0 0 0 .58  0 0 0 0 .53  0 2.0 0 0 -1.0"/><feComposite in2="SourceGraphic" operator="in"/></filter>
<filter id="cn" x="0" y="0" width="100%" height="100%"><feTurbulence type="fractalNoise" baseFrequency="0.08 0.08" numOctaves="3" seed="21" result="n"/><feColorMatrix in="n" type="matrix" values="0 0 0 0 .2  0 0 0 0 .19  0 0 0 0 .18  1.6 0 0 0 -0.6"/><feComposite in2="SourceGraphic" operator="in"/></filter>
</defs>
<rect x="13" y="491" width="1" height="88" fill="#fff"/>
<rect x="14" y="491" width="391" height="88" fill="#564431"/>
<rect x="14" y="491" width="391" height="88" fill="#000" filter="url(#g3)"/>
<rect x="14" y="491" width="391" height="88" fill="#000" filter="url(#g1)"/>
<rect x="14" y="491" width="391" height="88" fill="#000" filter="url(#g2)"/>
<rect x="13" y="579" width="392" height="1" fill="#fff"/>
<rect x="14" y="592" width="64" height="128" fill="#5a493f"/>
<rect x="14" y="592" width="64" height="128" fill="#000" filter="url(#wv)"/>
<rect x="29" y="592" width="1.3" height="128" fill="#1c140e"/>
<rect x="44" y="592" width="1.3" height="128" fill="#1c140e"/>
<rect x="59" y="592" width="1.3" height="128" fill="#1c140e"/>
<rect x="13.5" y="591.5" width="65" height="129" fill="none" stroke="#fff" stroke-width="1" shape-rendering="crispEdges"/>
<rect x="86" y="592" width="64" height="128" fill="#86604f"/>
<rect x="86" y="592" width="64" height="128" fill="#000" filter="url(#wv)"/>
<rect x="100" y="592" width="1.3" height="128" fill="#1c140e"/>
<rect x="116" y="592" width="1.3" height="128" fill="#1c140e"/>
<rect x="131" y="592" width="1.3" height="128" fill="#1c140e"/>
<rect x="85.5" y="591.5" width="65" height="129" fill="none" stroke="#fff" stroke-width="1" shape-rendering="crispEdges"/>
<rect x="158" y="592" width="129" height="64" fill="#85837f"/>
<rect x="158" y="592" width="129" height="64" fill="#000" filter="url(#cn)"/>
<rect x="178" y="592" width="8" height="64" fill="#6d6860"/><rect x="240" y="592" width="8" height="64" fill="#716c64"/>
<path d="M158 605.5h129M158 625.5h129M158 640.5h129" stroke="#5a5650" stroke-width="1.2"/>
<rect x="157.5" y="591.5" width="130" height="65" fill="none" stroke="#fff" stroke-width="1" shape-rendering="crispEdges"/>
<rect x="290.5" y="589.5" width="70" height="133" fill="none" stroke="#f00000" stroke-width="3"/>
<rect x="294" y="592" width="64" height="128" fill="#5f5042"/>
<rect x="294" y="592" width="64" height="128" fill="#000" filter="url(#wv)"/>
<rect x="308" y="592" width="1.3" height="128" fill="#241c14"/>
<rect x="323" y="592" width="1.3" height="128" fill="#241c14"/>
<rect x="340" y="592" width="1.3" height="128" fill="#241c14"/>
<rect x="294" y="592" width="64" height="128" fill="#000" filter="url(#wvl)"/>
<rect x="293.5" y="591.5" width="65" height="129" fill="none" stroke="#fff" stroke-width="1" shape-rendering="crispEdges"/>
<rect x="14" y="734" width="128" height="4" fill="#6a5a48"/>
<rect x="13.5" y="733.5" width="129" height="17" fill="none" stroke="#fff" stroke-width="1" shape-rendering="crispEdges"/>
<rect x="150" y="734" width="63" height="4" fill="#7e90b0"/>
<rect x="149.5" y="733.5" width="64" height="17" fill="none" stroke="#fff" stroke-width="1" shape-rendering="crispEdges"/>
<rect x="221.5" y="733.5" width="8" height="17" fill="none" stroke="#fff" stroke-width="1" shape-rendering="crispEdges"/>
</svg>
<div class="tx" style="left:8px;top:90px">stalker/wood_walls1</div>
<div class="tx" style="left:80px;top:90px">stalker/wood_walls2</div>
<div class="tx" style="left:152px;top:90px">stalker/wood_walls3</div>
<div class="tx" style="left:288px;top:90px">stalker/wood_walls5</div>
<div class="tx" style="left:8px;top:231px">stalker/wood_walls4</div>
<div class="tx" style="left:143px;top:231px">stalker/woodwall_h5</div>
<div class="tx" style="left:215px;top:231px">empty&nbsp;name</div>
</div>
<div class="a" style="left:405px;top:490px;width:19px;height:248px;background:linear-gradient(90deg,#fdfdfe,#efeff5);border-right:1px solid #c2c2d6"></div>
<div class="a" style="left:406px;top:491px;width:16px;height:17px;border:1px solid #9494ae;border-radius:2px;background:linear-gradient(#fcfcfe,#e4e4ee 50%,#cfcfdf)"></div>
<svg style="left:409px;top:495px" width="10" height="8" viewBox="0 0 10 8"><path d="M1.2 6.2L5 2.4 8.8 6.2" fill="none" stroke="#3c3c48" stroke-width="2"/></svg>
<div class="a" style="left:406px;top:509px;width:16px;height:16px;border:1px solid #9494ae;border-radius:2px;background:linear-gradient(90deg,#fcfcfe,#e0e0ec 50%,#cfcfdf)"></div>
<div class="a" style="left:411px;top:513px;width:7px;height:8px;background:repeating-linear-gradient(#8c8ca0 0,#8c8ca0 1px,#f4f4f8 1px,#f4f4f8 2px)"></div>
<div class="a" style="left:426px;top:717px;width:8px;height:19px;overflow:hidden;background:#e6e6ec;border-top:1px solid #c4c4d0"><span style="position:absolute;left:1px;top:2px;font:11px 'Liberation Sans',sans-serif;color:#222">ie</span></div>
<!-- Z PANEL -->
<div class="a" style="left:433px;top:82px;width:48px;height:30px;border-radius:7px 7px 0 0;background:linear-gradient(#fff 0,#f6f6fa 2px,#dcdce8 5px,#e0e0ea 12px,#f2f2f7 20px,#fff 26px);border:1px solid #c6c6d8;border-bottom:none"></div>
<div class="hl" style="left:442px;top:92px;font-weight:normal;font-size:13px;color:#a8a8a8">Z</div>
<svg style="left:476px;top:82px" width="5" height="6" viewBox="0 0 5 6"><path d="M.5 0h4.500v5.500z" fill="#111"/></svg>
<div class="a" style="left:433px;top:111px;width:4px;height:627px;background:linear-gradient(90deg,#dcdce8 0,#dcdce8 1px,#c2c2d6 1px,#c2c2d6 2px,#fff 2px,#fff 3px,#ccccde 3px)"></div>
<div class="a" style="left:477px;top:111px;width:4px;height:627px;background:linear-gradient(90deg,#ccccde 0,#ccccde 1px,#fff 1px,#fff 3px,#c2c2d6 3px)"></div>
<div class="a" style="left:437px;top:111px;width:40px;height:626px;background:#fff;overflow:hidden;box-shadow:inset 0 1px 0 #ccccde">
<svg width="40" height="626" viewBox="437 111 40 626" shape-rendering="crispEdges">
<rect x="457" y="111" width="1" height="626" fill="#7f7f7f"/>
<rect x="437" y="123" width="40" height="1" fill="#7f7f7f"/>
<rect x="437" y="187" width="40" height="1" fill="#7f7f7f"/>
<rect x="437" y="251" width="40" height="1" fill="#7f7f7f"/>
<rect x="437" y="315" width="40" height="1" fill="#7f7f7f"/>
<rect x="437" y="379" width="40" height="1" fill="#7f7f7f"/>
<rect x="437" y="443" width="40" height="1" fill="#7f7f7f"/>
<rect x="437" y="507" width="40" height="1" fill="#7f7f7f"/>
<rect x="437" y="571" width="40" height="1" fill="#7f7f7f"/>
<rect x="437" y="635" width="40" height="1" fill="#7f7f7f"/>
<rect x="437" y="699" width="40" height="1" fill="#7f7f7f"/>
<g shape-rendering="crispEdges" fill="none" stroke="#0000ff" stroke-width="1"><rect x="447.500" y="435.500" width="20" height="48"/><path d="M447.500 435.500L457.500 428.500L467.500 435.500L457.500 443.500z"/></g>
<g shape-rendering="crispEdges" fill="none" stroke="#ff00ff" stroke-width="1"><path d="M447.500 531.500h20v2.500L457.500 563.500 447.500 534z"/><rect x="447.500" y="563.500" width="20" height="8"/>
<rect x="447.500" y="699.500" width="20" height="8"/><path d="M457.500 707.500L448 738M457.500 707.500L467 738"/></g>
<rect x="445" y="628" width="25" height="7" fill="#000"/>
</svg>
<div class="zl" style="left:1px;top:2px">512</div>
<div class="zl" style="left:1px;top:66px">448</div>
<div class="zl" style="left:1px;top:130px">384</div>
<div class="zl" style="left:1px;top:194px">320</div>
<div class="zl" style="left:1px;top:258px">256</div>
<div class="zl" style="left:1px;top:322px">192</div>
<div class="zl" style="left:1px;top:386px">128</div>
<div class="zl" style="left:1px;top:450px">64</div>
<div class="zl" style="left:1px;top:514px">0</div>
<div class="zl" style="left:1px;top:578px">–64</div>
</div>
<!-- XY TOP PANEL -->
<div class="a" style="left:482px;top:80px;width:540px;height:30px;border-radius:8px 0 0 0;background:linear-gradient(#9c9cba 0,#9c9cba 1px,#fff 1px,#fff 2px,#ececf3 2px,#ececf3 3px,#bcbcd2 3px,#a6a6c4 5px,#b0b0ca 9px,#c6c6d8 15px,#e8e8ef 21px,#fdfdfe 25px,#fff 26px,#fff 100%);border:1px solid #70709a;border-bottom:none;border-right:none"></div>
<div class="a" style="left:482px;top:110px;width:3px;height:628px;background:linear-gradient(90deg,#9a9ab8 0,#9a9ab8 1px,#8282a8 1px,#8282a8 2px,#b4b4cc 2px)"></div>
<div class="a" style="left:484px;top:109px;width:538px;height:1px;background:#8080a6"></div>
<div class="a" style="transform:scaleX(0.9831);transform-origin:0 0;left:489.500px;top:88.800px;font:bold 13.500px 'Liberation Sans',sans-serif;color:#000;white-space:nowrap;text-shadow:1px 1px 1px rgba(120,120,150,.5)">XY Top</div>
<div class="a" style="left:485px;top:110px;width:537px;height:626px;background:#fff;overflow:hidden;box-shadow:2px 1px 0 #f5f3e8">
<svg width="539" height="627" viewBox="485 110 539 627" shape-rendering="crispEdges">
<rect x="556" y="110" width="1" height="627" fill="#7f7f7f"/>
<rect x="637" y="110" width="1" height="627" fill="#7f7f7f"/>
<rect x="717" y="110" width="1" height="627" fill="#7f7f7f"/>
<rect x="797" y="110" width="1" height="627" fill="#7f7f7f"/>
<rect x="877" y="110" width="1" height="627" fill="#7f7f7f"/>
<rect x="957" y="110" width="1" height="627" fill="#7f7f7f"/>
<rect x="485" y="166" width="539" height="1" fill="#7f7f7f"/>
<rect x="485" y="246" width="539" height="1" fill="#7f7f7f"/>
<rect x="485" y="326" width="539" height="1" fill="#7f7f7f"/>
<rect x="485" y="406" width="539" height="1" fill="#7f7f7f"/>
<rect x="485" y="486" width="539" height="1" fill="#7f7f7f"/>
<rect x="485" y="566" width="539" height="1" fill="#7f7f7f"/>
<rect x="485" y="646" width="539" height="1" fill="#7f7f7f"/>
<rect x="485" y="726" width="539" height="1" fill="#7f7f7f"/>
<rect x="616" y="166" width="1" height="340" fill="#000"/>
<rect x="896" y="166" width="1" height="356" fill="#000"/>
<rect x="626" y="166" width="1" height="491" fill="#000"/>
<rect x="887" y="166" width="1" height="491" fill="#000"/>
<rect x="643" y="176" width="1" height="483" fill="#000"/>
<rect x="648" y="176" width="1" height="483" fill="#000"/>
<rect x="650" y="176" width="1" height="483" fill="#000"/>
<rect x="786" y="176" width="1" height="483" fill="#000"/>
<rect x="788" y="176" width="1" height="483" fill="#000"/>
<rect x="793" y="176" width="1" height="483" fill="#000"/>
<rect x="806" y="176" width="1" height="483" fill="#000"/>
<rect x="808" y="176" width="1" height="483" fill="#000"/>
<rect x="813" y="176" width="1" height="483" fill="#000"/>
<rect x="841" y="176" width="1" height="483" fill="#000"/>
<rect x="843" y="176" width="1" height="483" fill="#000"/>
<rect x="848" y="176" width="1" height="483" fill="#000"/>
<rect x="637" y="176" width="1" height="481" fill="#000"/>
<rect x="665" y="176" width="1" height="481" fill="#000"/>
<rect x="720" y="176" width="1" height="481" fill="#000"/>
<rect x="743" y="176" width="1" height="481" fill="#000"/>
<rect x="748" y="176" width="1" height="481" fill="#000"/>
<rect x="750" y="176" width="1" height="481" fill="#000"/>
<rect x="877" y="176" width="1" height="481" fill="#000"/>
<rect x="683" y="176" width="1" height="476" fill="#000"/>
<rect x="688" y="176" width="1" height="476" fill="#000"/>
<rect x="690" y="176" width="1" height="476" fill="#000"/>
<rect x="700" y="176" width="1" height="476" fill="#000"/>
<rect x="771" y="176" width="1" height="476" fill="#000"/>
<rect x="831" y="176" width="1" height="479" fill="#000"/>
<rect x="832" y="646" width="1" height="9" fill="#000"/>
<rect x="871" y="176" width="1" height="478" fill="#000"/>
<rect x="757" y="166" width="1" height="336" fill="#000"/>
<rect x="757" y="566" width="1" height="11" fill="#000"/>
<rect x="757" y="636" width="1" height="11" fill="#000"/>
<rect x="671" y="176" width="2" height="481" fill="#000"/>
<rect x="706" y="176" width="2" height="476" fill="#000"/>
<rect x="726" y="176" width="2" height="481" fill="#000"/>
<rect x="764" y="176" width="2" height="476" fill="#000"/>
<rect x="824" y="176" width="2" height="478" fill="#000"/>
<rect x="864" y="176" width="2" height="478" fill="#000"/>
<rect x="637" y="166" width="1" height="11" fill="#000"/>
<rect x="877" y="166" width="1" height="11" fill="#000"/>
<rect x="627" y="656" width="11" height="1" fill="#000"/>
<rect x="643" y="658" width="8" height="1" fill="#000"/>
<rect x="665" y="656" width="8" height="1" fill="#000"/>
<rect x="720" y="656" width="8" height="1" fill="#000"/>
<rect x="743" y="656" width="8" height="1" fill="#000"/>
<rect x="786" y="658" width="8" height="1" fill="#000"/>
<rect x="806" y="658" width="8" height="1" fill="#000"/>
<rect x="841" y="658" width="8" height="1" fill="#000"/>
<rect x="877" y="656" width="11" height="1" fill="#000"/>
<rect x="864" y="653" width="8" height="1" fill="#000"/>
<rect x="616" y="166" width="281" height="1" fill="#000"/>
<rect x="637" y="167" width="241" height="1" fill="#000"/>
<rect x="626" y="176" width="262" height="1" fill="#000"/>
<rect x="626" y="186" width="262" height="1" fill="#000"/>
<rect x="627" y="166" width="1" height="21" fill="#000"/>
<rect x="626" y="246" width="262" height="1" fill="#000"/>
<rect x="626" y="256" width="262" height="1" fill="#000"/>
<rect x="627" y="246" width="1" height="11" fill="#000"/>
<rect x="626" y="326" width="262" height="1" fill="#000"/>
<rect x="626" y="336" width="262" height="1" fill="#000"/>
<rect x="627" y="326" width="1" height="11" fill="#000"/>
<rect x="626" y="406" width="262" height="1" fill="#000"/>
<rect x="626" y="416" width="262" height="1" fill="#000"/>
<rect x="627" y="406" width="1" height="11" fill="#000"/>
<rect x="626" y="566" width="262" height="1" fill="#000"/>
<rect x="626" y="576" width="262" height="1" fill="#000"/>
<rect x="627" y="566" width="1" height="11" fill="#000"/>
<rect x="616" y="491" width="281" height="1" fill="#000"/>
<rect x="626" y="501" width="262" height="1" fill="#000"/>
<rect x="627" y="491" width="1" height="11" fill="#000"/>
<rect x="757" y="636" width="131" height="1" fill="#000"/>
<rect x="637" y="646" width="251" height="1" fill="#000"/>
<rect x="637" y="654" width="43" height="1" fill="#000"/>
<rect x="679" y="646" width="1" height="9" fill="#000"/>
<rect x="679" y="651" width="153" height="1" fill="#000"/>
<rect x="679" y="653" width="154" height="2" fill="#000"/>
<rect x="832" y="654" width="46" height="1" fill="#000"/>
<rect x="556" y="396" width="82" height="1" fill="#000"/>
<rect x="556" y="496" width="82" height="1" fill="#000"/>
<rect x="556" y="396" width="1" height="101" fill="#000"/>
<rect x="576" y="396" width="1" height="101" fill="#000"/>
<rect x="596" y="396" width="1" height="101" fill="#000"/>
<polyline points="616.5,505.5 630.5,547.5 691.5,566.5 738.5,491.5" fill="none" stroke="#000" stroke-width="1" shape-rendering="crispEdges"/>
<polyline points="769.5,491.5 770.5,501.5 773.5,548.5 848.5,567.5 896.5,521.5" fill="none" stroke="#000" stroke-width="1" shape-rendering="crispEdges"/>
<polyline points="683.5,576.5 655.5,599.5 659.5,610.5 663.5,611.5 696.5,614.0 721.5,616.5 727.5,599.5 710.5,576.5 683.5,576.5" fill="none" stroke="#1e86d6" stroke-width="1" shape-rendering="crispEdges"/>
<polyline points="783.5,606.5 821.5,583.5 860.5,583.5 810.5,652.5 783.5,606.5" fill="none" stroke="#1e86d6" stroke-width="1" shape-rendering="crispEdges"/>
<rect x="625" y="636" width="1" height="11" fill="#1e86d6"/>
<rect x="625" y="636" width="131" height="1" fill="#1e86d6"/>
<rect x="755" y="636" width="1" height="11" fill="#1e86d6"/>
<rect x="625" y="646" width="12" height="1" fill="#1e86d6"/>
<rect x="688" y="597" width="4" height="4" fill="#f0001a"/>
<rect x="689" y="639" width="3" height="4" fill="#f0001a"/>
<rect x="818" y="617" width="4" height="4" fill="#f0001a"/>
<g shape-rendering="auto"><rect x="747.7" y="436.7" width="19.6" height="19.6" fill="none" stroke="#0fe81a" stroke-width="1.4"/>
<path d="M748 437l19 19M767 437l-19 19" stroke="#22e82c" stroke-width="1"/><circle cx="757.3" cy="446.3" r="1.7" fill="#f01818"/></g>
</svg>
<div class="gl" style="left:71.5px;top:1px">256</div>
<div class="gl" style="left:152.5px;top:1px">320</div>
<div class="gl" style="left:232.5px;top:1px">384</div>
<div class="gl" style="left:312.5px;top:1px">448</div>
<div class="gl" style="left:392.5px;top:1px">512</div>
<div class="gl" style="left:472.5px;top:1px">576</div>
<div class="gl" style="left:2px;top:47px">256</div>
<div class="gl" style="left:2px;top:127px">192</div>
<div class="gl" style="left:2px;top:207px">128</div>
<div class="gl" style="left:2px;top:287px">64</div>
<div class="gl" style="left:2px;top:367px">0</div>
<div class="gl" style="left:2px;top:447px">–64</div>
<div class="gl" style="left:2px;top:527px">–128</div>
<div class="gl" style="left:2px;top:607px">–192</div>
<div class="gl" style="left:36px;top:11px;color:#8618d6;letter-spacing:.35px">XY&nbsp; Top</div>
</div>
<!-- TASKBAR -->
<div class="a" style="left:0;top:737px;width:1024px;height:1px;background:#f2f2f6"></div>
<div class="a" style="left:0;top:738px;width:1024px;height:30px;background:linear-gradient(#8486a6 0,#b9bacc 1px,#eeeef4 3px,#e1e1ea 6px,#c9c9d8 12px,#b9b9cb 18px,#a9a9be 24px,#9494ac 28px,#7c7c96 30px)"></div>
<!-- start button -->
<div class="a" style="left:0;top:738px;width:97px;height:30px;border-radius:0 14px 14px 0/0 15px 15px 0;background:linear-gradient(#2f7d2b 0,#5cb257 2px,#48a046 6px,#3a9439 12px,#358f35 20px,#2e842f 25px,#24702a 30px);box-shadow:inset -3px 0 4px rgba(20,70,20,.55),inset 0 2px 2px rgba(150,220,140,.5)"></div>
<svg style="left:9px;top:743px" width="22" height="20" viewBox="0 0 22 20"><path d="M2 3.5C5 1.6 7.5 1.6 10 3.2L8.6 9.3C6.2 7.8 3.8 7.8 .9 9.6z" fill="#e8502a"/><path d="M11 3.6c2.6 1.5 5.2 1.5 8.2-.3L17.7 9.4c-2.8 1.7-5.3 1.7-7.9.2z" fill="#78b833"/><path d="M.7 10.6c2.8-1.7 5.3-1.7 7.7-.2L7 16.6C4.500 15 2 15-.8 16.700z" fill="#4a7fe0"/><path d="M9.600 10.800c2.500 1.500 5.100 1.500 7.900-.2L16.100 16.600c-2.800 1.700-5.400 1.700-7.900.200z" fill="#f2c230"/></svg>
<div class="a tk" style="letter-spacing:-0.105px;left:34.500px;top:743px;font:italic bold 17px 'Liberation Sans',sans-serif;color:#fff;text-shadow:1px 1px 2px rgba(20,60,20,.9);white-space:nowrap">пуск</div>
<!-- quick launch -->
<svg style="left:108px;top:744px" width="18" height="18" viewBox="0 0 18 18"><path d="M3 9L11 1.500l3.500 3L6.500 16z" fill="#f2a020" stroke="#4a4a52" stroke-width="1.400"/><path d="M5 9l6-5.500" stroke="#ffe9a0" stroke-width="1.500"/></svg>
<svg style="left:130px;top:743px" width="19" height="19" viewBox="0 0 19 19"><circle cx="9" cy="10.500" r="6.200" fill="none" stroke="#2a86e0" stroke-width="3.400"/><rect x="4" y="9.300" width="11" height="2.400" fill="#2a86e0"/><rect x="10" y="11.500" width="7" height="3" fill="#c6c7d6"/><path d="M2.500 15C1 8 10 1 17 3" fill="none" stroke="#5aa8f0" stroke-width="1.300"/></svg>
<svg style="left:152px;top:743px" width="19" height="19" viewBox="0 0 19 19"><circle cx="9.500" cy="9.500" r="8" fill="#e8e8f0" stroke="#d08030" stroke-width="1.600"/><circle cx="9.500" cy="9.500" r="5.600" fill="#1c3fb0"/><path d="M7.500 6.300L13 9.500 7.500 12.700z" fill="#fff"/><path d="M2 7a8 8 0 0 1 6-5.300" stroke="#40b040" stroke-width="1.800" fill="none"/></svg>
<div class="a tk" style="left:184px;top:739px;font:bold 12px 'Liberation Sans',sans-serif;color:#111">»</div>
<!-- task button -->
<div class="a" style="left:198px;top:741px;width:159px;height:25px;border-radius:3px;background:linear-gradient(#7e8494 0,#6c7283 3px,#646a7b 14px,#5d6374 25px);box-shadow:inset 1px 1px 1px #4c5162,inset -1px -1px 0 #8e94a4"></div>
<svg style="left:208px;top:747px" width="17" height="14" viewBox="0 0 17 14"><rect x=".500" y=".500" width="15" height="12" fill="#fff" stroke="#2b5fcf"/><rect x="1" y="1" width="14" height="3" fill="#2f66d8"/></svg>
<div class="a tk" style="letter-spacing:-0.118px;left:227px;top:747px;font:11px 'Liberation Sans',sans-serif;color:#fff;white-space:nowrap">DOOMEdit: D:/Games...</div>
<!-- lang -->
<div class="a" style="left:796px;top:745px;width:15px;height:16px;background:#aeb0c6"></div>
<div class="a tk" style="left:797px;top:747px;font:11px 'Liberation Sans',sans-serif;color:#000">EN</div>
<!-- search -->
<div class="a" style="left:818px;top:742px;width:101px;height:22px;background:#fff;border:1px solid #a6a8be;box-shadow:inset 1px 1px 0 #d6d6e2"></div>
<div class="a tk" style="left:823px;top:746px;font:11px 'Liberation Sans',sans-serif;color:#6e6e78;white-space:nowrap">Type to search</div>
<div class="a" style="left:900px;top:745px;width:17px;height:16px;border:1px solid;border-color:#5a9ae8 #e06a50 #50a850 #5a9ae8;background:#fff"></div>
<div class="a tk" style="left:903px;top:744px;font:15px 'Liberation Sans',sans-serif;color:#4a78d8">G</div>
<svg style="left:921px;top:750px" width="8" height="5" viewBox="0 0 8 5"><path d="M0 0h7L3.500 4z" fill="#111"/></svg>
<!-- tray -->
<div class="a" style="left:949px;top:738px;width:75px;height:30px;background:linear-gradient(#fdfdfe 0,#f6f6fa 5px,#e6e6ee 10px,#d2d2df 17px,#bcbccd 23px,#a2a2b9 28px,#8686a2 30px);border-left:1px solid #9a9cb6"></div>
<svg style="left:939px;top:743px" width="20" height="20" viewBox="0 0 20 20"><circle cx="10" cy="10" r="9" fill="#9a9cb6" stroke="#6c6e8e" stroke-width="1.200"/><circle cx="10" cy="9" r="7" fill="#b8bace" opacity=".7"/><path d="M11.800 5.500L7.300 10l4.500 4.500" fill="none" stroke="#fff" stroke-width="2.200"/></svg>
<svg style="left:960px;top:745px" width="17" height="17" viewBox="0 0 17 17"><circle cx="8.500" cy="8.500" r="7.800" fill="#e8c020"/><path d="M8.500 8.500L1.500 5A7.800 7.800 0 0 1 15.800 6z" fill="#e03a2a"/><path d="M8.500 8.500L15.800 6A7.800 7.800 0 0 1 8 16.300z" fill="#3fa846"/><path d="M8.500 8.500L8 16.300A7.800 7.800 0 0 1 1.500 5z" fill="#f0c420"/><circle cx="8.500" cy="8.500" r="3.300" fill="#4a88e8" stroke="#f4f4f4" stroke-width="1"/></svg>
<div class="a tk" style="left:985px;top:747px;font:11.500px 'Liberation Sans',sans-serif;color:#000">7:55</div>
</body></html>
